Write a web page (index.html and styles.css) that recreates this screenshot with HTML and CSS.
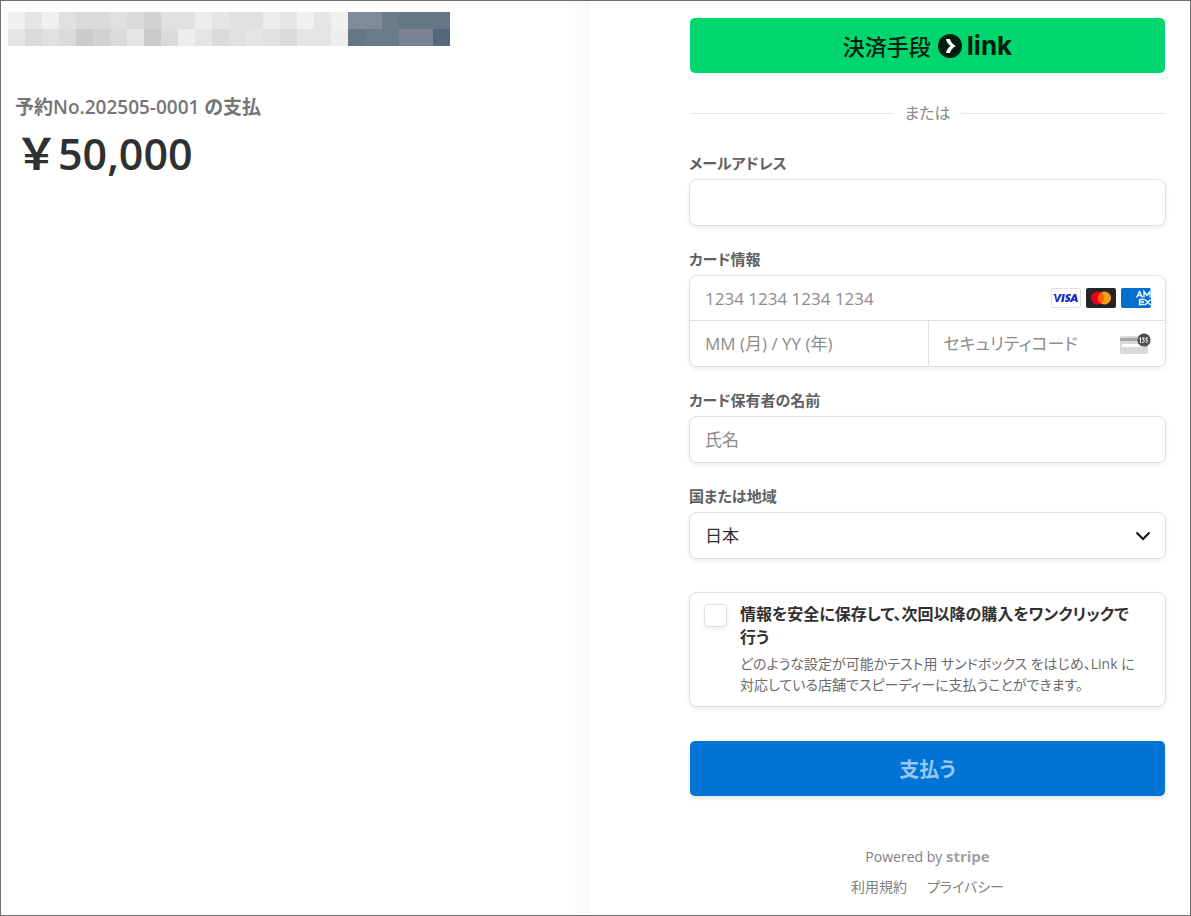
FILE: index.html
```html
<!DOCTYPE html>
<html lang="ja">
<head>
    <meta charset="UTF-8">
    <meta name="viewport" content="width=device-width, initial-scale=1.0">
    <title>お支払い</title>
    <link rel="stylesheet" href="styles.css">
</head>
<body>
    <div class="checkout">
        <section class="summary">
            <svg class="merchant" width="442" height="34" viewBox="0 0 26 2" shape-rendering="crispEdges" aria-hidden="true">
                <rect width="20" height="2" fill="#e0e0e0"/>
                <path fill="#f0f0f0" d="M0 0h1v1h-1zM2 0h1v1h-1zM17 0h1v1h-1zM19 0h1v1h-1z"/>
                <path fill="#ededed" d="M11 0h1v1h-1zM15 0h1v1h-1zM10 1h1v1h-1zM19 1h1v1h-1z"/>
                <path fill="#e5e5e5" d="M1 0h1v1h-1zM12 0h1v1h-1zM16 0h1v1h-1zM18 0h1v1h-1zM0 1h1v1h-1zM7 1h1v1h-1zM11 1h1v1h-1zM14 1h1v1h-1zM17 1h2v1h-2z"/>
                <path fill="#dadada" d="M4 0h2v1h-2zM7 0h1v1h-1zM1 1h1v1h-1zM3 1h1v1h-1zM6 1h1v1h-1zM9 1h1v1h-1zM12 1h1v1h-1zM16 1h1v1h-1z"/>
                <path fill="#d2d2d2" d="M8 0h1v1h-1zM5 1h1v1h-1z"/>
                <path fill="#cbcbcb" d="M4 1h1v1h-1zM8 1h1v1h-1z"/>
                <rect x="20" width="6" height="2" fill="#657687"/>
                <path fill="#7e8b99" d="M20 0h2v1h-2z"/>
                <path fill="#6c7b8c" d="M22 0h1v1h-1zM21 1h2v1h-2z"/>
                <path fill="#7a8496" d="M23 1h2v1h-2z"/>
                <path fill="#56677a" d="M25 1h1v1h-1z"/>
            </svg>
            <h1 class="product">予約No.202505-0001 の支払</h1>
            <p class="amount">￥50,000</p>
        </section>

        <main class="payment">
            <form action="#" method="post">
                <button type="button" class="btn btn-link">
                    <span>決済手段</span>
                    <svg class="link-mark" width="24" height="24" viewBox="0 0 24 24" aria-hidden="true">
                        <circle cx="12" cy="12" r="12" fill="#011e0f"/>
                        <path d="M8 5h4c.8 3 2.800 5.500 6 7-3.200 1.500-5.200 4-6 7H8c.6-3 2.200-5.500 4.700-7C10.200 10.500 8.600 8 8 5z" fill="#fff"/>
                    </svg>
                    <span class="link-word">link</span>
                </button>

                <div class="divider">または</div>

                <div class="field">
                    <label for="email">メールアドレス</label>
                    <input type="email" id="email" name="email" class="box">
                </div>

                <div class="field">
                    <label for="card-number">カード情報</label>
                    <div class="box card">
                        <div class="card-row">
                            <input type="text" id="card-number" name="card_number" placeholder="1234 1234 1234 1234">
                            <div class="brands">
                                <svg width="30" height="20" viewBox="0 0 30 20" role="img" aria-label="Visa">
                                    <rect x=".5" y=".5" width="29" height="19" rx="1.500" fill="#fff" stroke="#e0e0e0"/>
                                    <path d="M2 6h3l1 5.500L8.500 6H11L7 14H5L3.600 7.500zM11.600 6H14l-1.500 8h-2.400zM20 6.300l-.5 1.900c-1.300-.6-2.500-.6-2.500 0 0 .7 2.300 1 2.300 3 0 2.600-3.200 3.300-5.600 2.400l.5-2c1.300.7 2.800.7 2.800.1 0-.9-2.400-1-2.400-3 0-2.500 3-3.400 5.400-2.400zM22.800 6h2.400l1.800 8h-2.300l-.3-1.200h-2.800l-.6 1.200h-2.400zm1.100 2.700-1.200 2.500H24z" fill="#1a2ec4"/>
                                </svg>
                                <svg width="30" height="20" viewBox="0 0 30 20" role="img" aria-label="Mastercard">
                                    <rect width="30" height="20" rx="2" fill="#252525"/>
                                    <circle cx="11.500" cy="10" r="6.500" fill="#eb001b"/>
                                    <circle cx="18.500" cy="10" r="6.500" fill="#f79e1b"/>
                                    <path d="M15 4.500a6.500 6.500 0 0 1 0 11 6.500 6.500 0 0 1 0-11z" fill="#ff5f00"/>
                                </svg>
                                <svg width="30" height="20" viewBox="0 0 30 20" role="img" aria-label="American Express">
                                    <rect width="30" height="20" rx="2" fill="#016fd0"/>
                                    <path d="M15.500 9.500 18.500 3.500 21.500 9.500M16.800 7.500h3.400M23 9.500v-6l3 4 3-4v6M23.500 11.500h-5v5h5M18.500 14H23M24 11.500l5.500 5.500M29.500 11.500l-5.500 5.500" fill="none" stroke="#fff" stroke-width="1.300"/>
                                </svg>
                            </div>
                        </div>
                        <div class="card-row card-split">
                            <input type="text" name="expiry" placeholder="MM (月) / YY (年)" aria-label="有効期限">
                            <div class="cvc">
                                <input type="text" name="cvc" placeholder="セキュリティコード" aria-label="セキュリティコード">
                                <svg width="31" height="22" viewBox="0 0 31 22" aria-hidden="true">
                                    <rect y="3" width="28" height="18" rx="2" fill="#d9d9d9"/>
                                    <path d="M0 5h28v3H0z" fill="#a6a6a6"/>
                                    <rect x="2" y="11" width="23" height="3" rx="1" fill="#fff"/>
                                    <circle cx="24" cy="7" r="6.600" fill="#4f4f4f"/>
                                    <path d="M19.500 5.500l1-.7V10M22 5h2.200l-1.200 1.800c2 0 2 3-1.100 2.700M28 5h-2v2.200c2.400-.6 2.400 2.500-.2 2.300" fill="none" stroke="#fff"/>
                                </svg>
                            </div>
                        </div>
                    </div>
                </div>

                <div class="field">
                    <label for="name">カード保有者の名前</label>
                    <input type="text" id="name" name="name" class="box" placeholder="氏名">
                </div>

                <div class="field">
                    <label for="country">国または地域</label>
                    <div class="select-wrap">
                        <select id="country" name="country" class="box">
                            <option value="JP">日本</option>
                        </select>
                        <svg class="chevron" width="16" height="10" viewBox="0 0 16 10" aria-hidden="true">
                            <path d="M1.500 1.500 8 8l6.500-6.500" fill="none" stroke="#111" stroke-width="2"/>
                        </svg>
                    </div>
                </div>

                <div class="box save">
                    <input type="checkbox" id="save" name="save">
                    <div>
                        <label for="save">情報を安全に保存して、次回以降の購入をワンクリックで行う</label>
                        <p>どのような設定が可能かテスト用 サンドボックス をはじめ、Link に対応している店舗でスピーディーに支払うことができます。</p>
                    </div>
                </div>

                <button type="submit" class="btn btn-pay">支払う</button>
            </form>

            <footer>
                <div>Powered by <a href="#" class="stripe">stripe</a></div>
                <nav>
                    <a href="#">利用規約</a>
                    <a href="#">プライバシー</a>
                </nav>
            </footer>
        </main>
    </div>
</body>
</html>
```
FILE: styles.css
```css
* {
    box-sizing: border-box;
}

body {
    margin: 0;
    font-family: "Open Sans", "Noto Sans CJK JP", sans-serif;
    font-feature-settings: "palt";
    color: #303030;
    background-color: #fff;
}

input,
select,
button {
    font: inherit;
    font-feature-settings: inherit;
    color: inherit;
}

.checkout {
    display: grid;
    grid-template-columns: 589fr 600fr;
    min-height: 100vh;
    border: 1px solid #707070;
}

/* Left side */
.summary {
    padding: 11px 7px;
    background: linear-gradient(to left, #f8f8f8, #fff 24px);
}

.merchant {
    display: block;
}

.product {
    margin: 47px 7px 0;
    font-size: 19px;
    line-height: 28px;
    font-weight: 600;
    color: #757575;
}

.amount {
    margin: 3px 7px 0;
    font-size: 43px;
    line-height: 60px;
    font-weight: 600;
    font-feature-settings: normal;
}

/* Right side */
.payment {
    min-width: 0;
    padding: 17px 24px 16px 99px;
}

.btn {
    display: flex;
    align-items: center;
    justify-content: center;
    width: calc(100% - 2px);
    height: 55px;
    margin: 0 1px;
    border: none;
    border-radius: 5px;
    cursor: pointer;
}

.btn-link {
    gap: 7px;
    background-color: #00d66f;
    color: #011e0f;
    font-size: 22px;
    line-height: 28px;
    font-weight: 500;
}

.link-word {
    margin-left: -2px;
    font-family: Inter, sans-serif;
    font-size: 26px;
    font-weight: 700;
}

.divider {
    display: flex;
    align-items: center;
    gap: 10px;
    margin: 30px 1px;
    font-size: 16px;
    line-height: 21px;
    color: #8a8a8a;
}

.divider::before,
.divider::after {
    content: "";
    flex: 1;
    height: 1px;
    background-color: #e6e6e6;
}

.field {
    margin-bottom: 24px;
}

.field label {
    display: block;
    margin-bottom: 7px;
    font-size: 15px;
    line-height: 18px;
    font-weight: 600;
    color: #606060;
}

.box {
    display: block;
    width: 100%;
    border: 1px solid #e0e0e0;
    border-radius: 8px;
    background-color: #fff;
    box-shadow: 0 2px 4px rgba(0, 0, 0, 0.07);
}

input.box,
select.box {
    height: 47px;
    padding: 0 15px;
    font-size: 17px;
}

::placeholder {
    color: #8c8c8c;
    opacity: 1;
}

.card-row {
    display: flex;
    align-items: center;
    height: 44px;
    padding-right: 14px;
}

.card input {
    flex: 1;
    min-width: 0;
    height: 44px;
    padding: 0 15px;
    border: none;
    background: none;
    font-size: 17px;
}

.card-row.card-split {
    display: grid;
    grid-template-columns: 1fr 1fr;
    height: 46px;
    padding-right: 0;
    border-top: 1px solid #e0e0e0;
}

.brands {
    display: flex;
    gap: 5px;
}

.cvc {
    display: flex;
    align-items: center;
    height: 100%;
    min-width: 0;
    padding-right: 14px;
    border-left: 1px solid #e0e0e0;
}

.cvc svg {
    flex: none;
}

.select-wrap {
    position: relative;
}

select.box {
    appearance: none;
}

.chevron {
    position: absolute;
    top: 19px;
    right: 15px;
    pointer-events: none;
}

.save {
    display: flex;
    gap: 13px;
    margin: 33px 0 34px;
    padding: 10px 24px 11px 14px;
}

.save input {
    flex: none;
    appearance: none;
    width: 23px;
    height: 23px;
    margin: 1px 0 0;
    border: 1px solid #e0e0e0;
    border-radius: 4px;
    box-shadow: 0 2px 4px rgba(0, 0, 0, 0.07);
}

.save label {
    display: block;
    font-size: 16px;
    line-height: 23px;
    font-weight: 600;
}

.save p {
    margin: 4px 0 0;
    font-size: 14px;
    line-height: 21px;
    color: #6b6b6b;
}

.btn-pay {
    background-color: #0074d4;
    color: #99c7ee;
    font-size: 20px;
    font-weight: 600;
    box-shadow: 0 2px 4px rgba(0, 0, 0, 0.12);
}

footer {
    margin-top: 49px;
    text-align: center;
    font-size: 14px;
    line-height: 22px;
    color: #808080;
}

footer a {
    color: inherit;
    text-decoration: none;
}

footer nav {
    display: flex;
    justify-content: center;
    gap: 20px;
    margin-top: 8px;
}

footer .stripe {
    font-size: 15px;
    font-weight: 700;
    color: #a0a0a0;
}
```
